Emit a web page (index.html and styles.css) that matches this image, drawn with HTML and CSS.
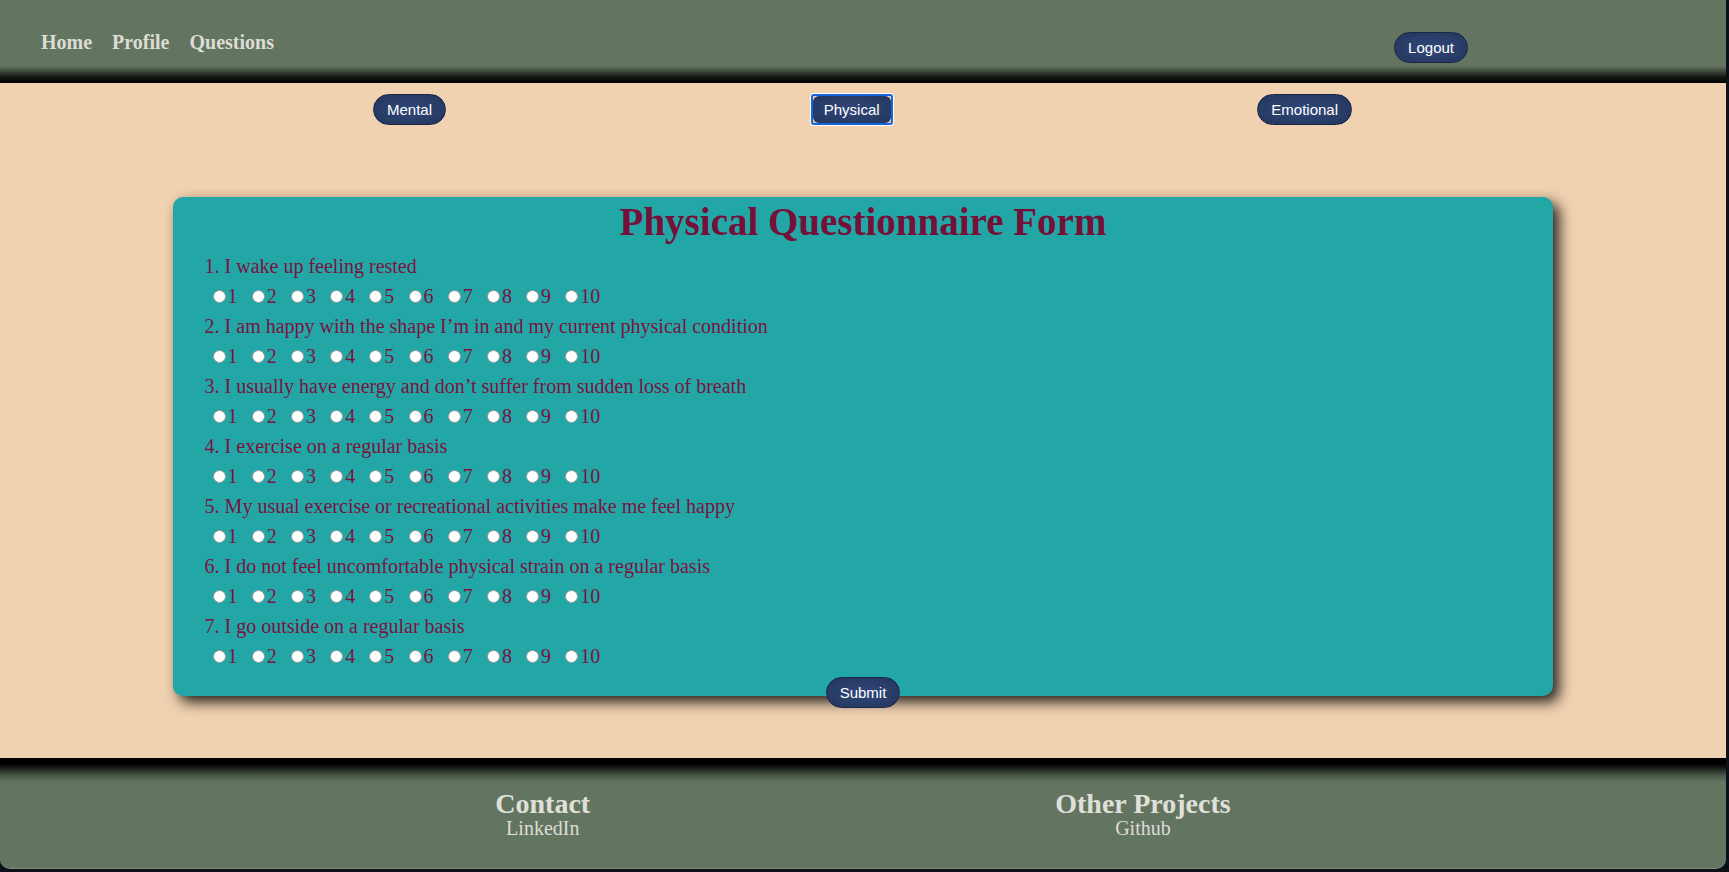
FILE: index.html
```html
<!DOCTYPE html>
<html lang="en">
<head>
<meta charset="utf-8">
<title>Physical Questionnaire Form</title>
<link rel="stylesheet" href="styles.css">
</head>
<body>
<div class="page">
  <header class="topbar">
    <nav class="nav">
      <a href="#">Home</a>
      <a href="#">Profile</a>
      <a href="#">Questions</a>
    </nav>
    <button class="btn logout" type="button">Logout</button>
  </header>

  <main class="main">
    <div class="tabs">
      <button class="btn" type="button">Mental</button>
      <button class="btn current" type="button"><span class="current-fill">Physical</span></button>
      <button class="btn" type="button">Emotional</button>
    </div>

    <form class="card">
      <h1 class="title">Physical Questionnaire Form</h1>

      <div class="q">
        <p class="q-text">1. I wake up feeling rested</p>
        <div class="opts">
          <label class="opt"><input type="radio" name="q1" value="1">1</label>
          <label class="opt"><input type="radio" name="q1" value="2">2</label>
          <label class="opt"><input type="radio" name="q1" value="3">3</label>
          <label class="opt"><input type="radio" name="q1" value="4">4</label>
          <label class="opt"><input type="radio" name="q1" value="5">5</label>
          <label class="opt"><input type="radio" name="q1" value="6">6</label>
          <label class="opt"><input type="radio" name="q1" value="7">7</label>
          <label class="opt"><input type="radio" name="q1" value="8">8</label>
          <label class="opt"><input type="radio" name="q1" value="9">9</label>
          <label class="opt"><input type="radio" name="q1" value="10">10</label>
        </div>
      </div>

      <div class="q">
        <p class="q-text">2. I am happy with the shape I’m in and my current physical condition</p>
        <div class="opts">
          <label class="opt"><input type="radio" name="q2" value="1">1</label>
          <label class="opt"><input type="radio" name="q2" value="2">2</label>
          <label class="opt"><input type="radio" name="q2" value="3">3</label>
          <label class="opt"><input type="radio" name="q2" value="4">4</label>
          <label class="opt"><input type="radio" name="q2" value="5">5</label>
          <label class="opt"><input type="radio" name="q2" value="6">6</label>
          <label class="opt"><input type="radio" name="q2" value="7">7</label>
          <label class="opt"><input type="radio" name="q2" value="8">8</label>
          <label class="opt"><input type="radio" name="q2" value="9">9</label>
          <label class="opt"><input type="radio" name="q2" value="10">10</label>
        </div>
      </div>

      <div class="q">
        <p class="q-text">3. I usually have energy and don’t suffer from sudden loss of breath</p>
        <div class="opts">
          <label class="opt"><input type="radio" name="q3" value="1">1</label>
          <label class="opt"><input type="radio" name="q3" value="2">2</label>
          <label class="opt"><input type="radio" name="q3" value="3">3</label>
          <label class="opt"><input type="radio" name="q3" value="4">4</label>
          <label class="opt"><input type="radio" name="q3" value="5">5</label>
          <label class="opt"><input type="radio" name="q3" value="6">6</label>
          <label class="opt"><input type="radio" name="q3" value="7">7</label>
          <label class="opt"><input type="radio" name="q3" value="8">8</label>
          <label class="opt"><input type="radio" name="q3" value="9">9</label>
          <label class="opt"><input type="radio" name="q3" value="10">10</label>
        </div>
      </div>

      <div class="q">
        <p class="q-text">4. I exercise on a regular basis</p>
        <div class="opts">
          <label class="opt"><input type="radio" name="q4" value="1">1</label>
          <label class="opt"><input type="radio" name="q4" value="2">2</label>
          <label class="opt"><input type="radio" name="q4" value="3">3</label>
          <label class="opt"><input type="radio" name="q4" value="4">4</label>
          <label class="opt"><input type="radio" name="q4" value="5">5</label>
          <label class="opt"><input type="radio" name="q4" value="6">6</label>
          <label class="opt"><input type="radio" name="q4" value="7">7</label>
          <label class="opt"><input type="radio" name="q4" value="8">8</label>
          <label class="opt"><input type="radio" name="q4" value="9">9</label>
          <label class="opt"><input type="radio" name="q4" value="10">10</label>
        </div>
      </div>

      <div class="q">
        <p class="q-text">5. My usual exercise or recreational activities make me feel happy</p>
        <div class="opts">
          <label class="opt"><input type="radio" name="q5" value="1">1</label>
          <label class="opt"><input type="radio" name="q5" value="2">2</label>
          <label class="opt"><input type="radio" name="q5" value="3">3</label>
          <label class="opt"><input type="radio" name="q5" value="4">4</label>
          <label class="opt"><input type="radio" name="q5" value="5">5</label>
          <label class="opt"><input type="radio" name="q5" value="6">6</label>
          <label class="opt"><input type="radio" name="q5" value="7">7</label>
          <label class="opt"><input type="radio" name="q5" value="8">8</label>
          <label class="opt"><input type="radio" name="q5" value="9">9</label>
          <label class="opt"><input type="radio" name="q5" value="10">10</label>
        </div>
      </div>

      <div class="q">
        <p class="q-text">6. I do not feel uncomfortable physical strain on a regular basis</p>
        <div class="opts">
          <label class="opt"><input type="radio" name="q6" value="1">1</label>
          <label class="opt"><input type="radio" name="q6" value="2">2</label>
          <label class="opt"><input type="radio" name="q6" value="3">3</label>
          <label class="opt"><input type="radio" name="q6" value="4">4</label>
          <label class="opt"><input type="radio" name="q6" value="5">5</label>
          <label class="opt"><input type="radio" name="q6" value="6">6</label>
          <label class="opt"><input type="radio" name="q6" value="7">7</label>
          <label class="opt"><input type="radio" name="q6" value="8">8</label>
          <label class="opt"><input type="radio" name="q6" value="9">9</label>
          <label class="opt"><input type="radio" name="q6" value="10">10</label>
        </div>
      </div>

      <div class="q">
        <p class="q-text">7. I go outside on a regular basis</p>
        <div class="opts">
          <label class="opt"><input type="radio" name="q7" value="1">1</label>
          <label class="opt"><input type="radio" name="q7" value="2">2</label>
          <label class="opt"><input type="radio" name="q7" value="3">3</label>
          <label class="opt"><input type="radio" name="q7" value="4">4</label>
          <label class="opt"><input type="radio" name="q7" value="5">5</label>
          <label class="opt"><input type="radio" name="q7" value="6">6</label>
          <label class="opt"><input type="radio" name="q7" value="7">7</label>
          <label class="opt"><input type="radio" name="q7" value="8">8</label>
          <label class="opt"><input type="radio" name="q7" value="9">9</label>
          <label class="opt"><input type="radio" name="q7" value="10">10</label>
        </div>
      </div>

      <button class="btn submit" type="button">Submit</button>
    </form>
  </main>

  <footer class="footer">
    <div class="foot-col">
      <h2 class="foot-title">Contact</h2>
      <a class="foot-link" href="#">LinkedIn</a>
    </div>
    <div class="foot-col">
      <h2 class="foot-title">Other Projects</h2>
      <a class="foot-link" href="#">Github</a>
    </div>
  </footer>
</div>
</body>
</html>
```

FILE: styles.css
```css
* {
  box-sizing: border-box;
}

html, body {
  margin: 0;
  padding: 0;
}

body {
  background: #0d1117;
  font-family: "Liberation Serif", "Times New Roman", serif;
}

.page {
  width: calc(100% - 3px);
}

/* ---------- header ---------- */
.topbar {
  height: 83px;
  display: flex;
  align-items: flex-start;
  padding: 31px 0 0 41px;
  background: linear-gradient(to bottom,
    #637460 0,
    #637460 66px,
    #3f4a3d 71px,
    #151914 77px,
    #000 83px);
}

.nav {
  display: flex;
  gap: 20px;
}

.nav a {
  font-family: "Liberation Serif", serif;
  font-weight: bold;
  font-size: 20px;
  line-height: 23px;
  color: #dcdcd6;
  text-decoration: none;
}

/* ---------- buttons ---------- */
.btn {
  font-family: "Liberation Sans", Arial, sans-serif;
  font-size: 15px;
  line-height: 17px;
  color: #fff;
  padding: 6px 13px;
  border: 1px solid #1a2746;
  border-radius: 16px;
  background: radial-gradient(ellipse at center, #30467a 0%, #293e69 55%, #22355c 100%);
  cursor: pointer;
}

.logout {
  margin: 1px 258px 0 auto;
}

/* ---------- main ---------- */
.main {
  background: #f0d1b0;
  padding: 11px 0 62px;
}

.tabs {
  display: flex;
  justify-content: space-between;
  padding: 0 374px 0 373px;
}

.btn.current {
  padding: 0;
  border: 2px solid #1763d9;
  border-radius: 3px;
  background: transparent;
  box-shadow: 0 0 0 1px #ffffff;
}

.current-fill {
  display: block;
  padding: 5px 11px;
  border-radius: 6px;
  background: radial-gradient(ellipse at center, #30467a 0%, #293e69 55%, #22355c 100%);
}

.card {
  display: flow-root;
  width: 80%;
  margin: 72px auto 0;
  padding: 3px 32px 0;
  background: #23a6a6;
  border-radius: 10px;
  box-shadow: 6px 6px 14px rgba(0, 0, 0, 0.85);
  color: #7a1340;
}

.title {
  margin: 0 0 7px;
  text-align: center;
  font-family: "Liberation Serif", serif;
  font-weight: bold;
  font-size: 39px;
  line-height: 44px;
  color: #731139;
}

.q-text {
  margin: 0;
  font-size: 20px;
  line-height: 30px;
}

.opts {
  display: flex;
  align-items: center;
  gap: 14.2px;
  height: 30px;
  padding-left: 8px;
  font-size: 20px;
  line-height: 30px;
}

.opt {
  display: inline-flex;
  align-items: center;
}

.opt input {
  appearance: none;
  -webkit-appearance: none;
  width: 13px;
  height: 13px;
  margin: 0 2px 0 0;
  border-radius: 50%;
  border: 1px solid #9a9a9a;
  background: #fff;
}

.submit {
  display: block;
  margin: 6px auto -12px;
}

/* ---------- footer ---------- */
.footer {
  height: 111px;
  display: flex;
  justify-content: center;
  gap: 465px;
  padding-top: 31px;
  border-radius: 0 0 10px 10px;
  border-bottom: 1px solid #7d8c7a;
  background: linear-gradient(to bottom,
    #000 0,
    #000 6px,
    #1d241c 11px,
    #465444 17px,
    #637460 24px);
}

.foot-col {
  display: flex;
  flex-direction: column;
  align-items: center;
}

.foot-title {
  margin: 0;
  font-family: "Liberation Serif", serif;
  font-weight: bold;
  font-size: 28px;
  line-height: 29px;
  color: #e0e0da;
}

.foot-link {
  font-size: 20px;
  line-height: 20px;
  color: #dcdcd6;
  text-decoration: none;
}
```
